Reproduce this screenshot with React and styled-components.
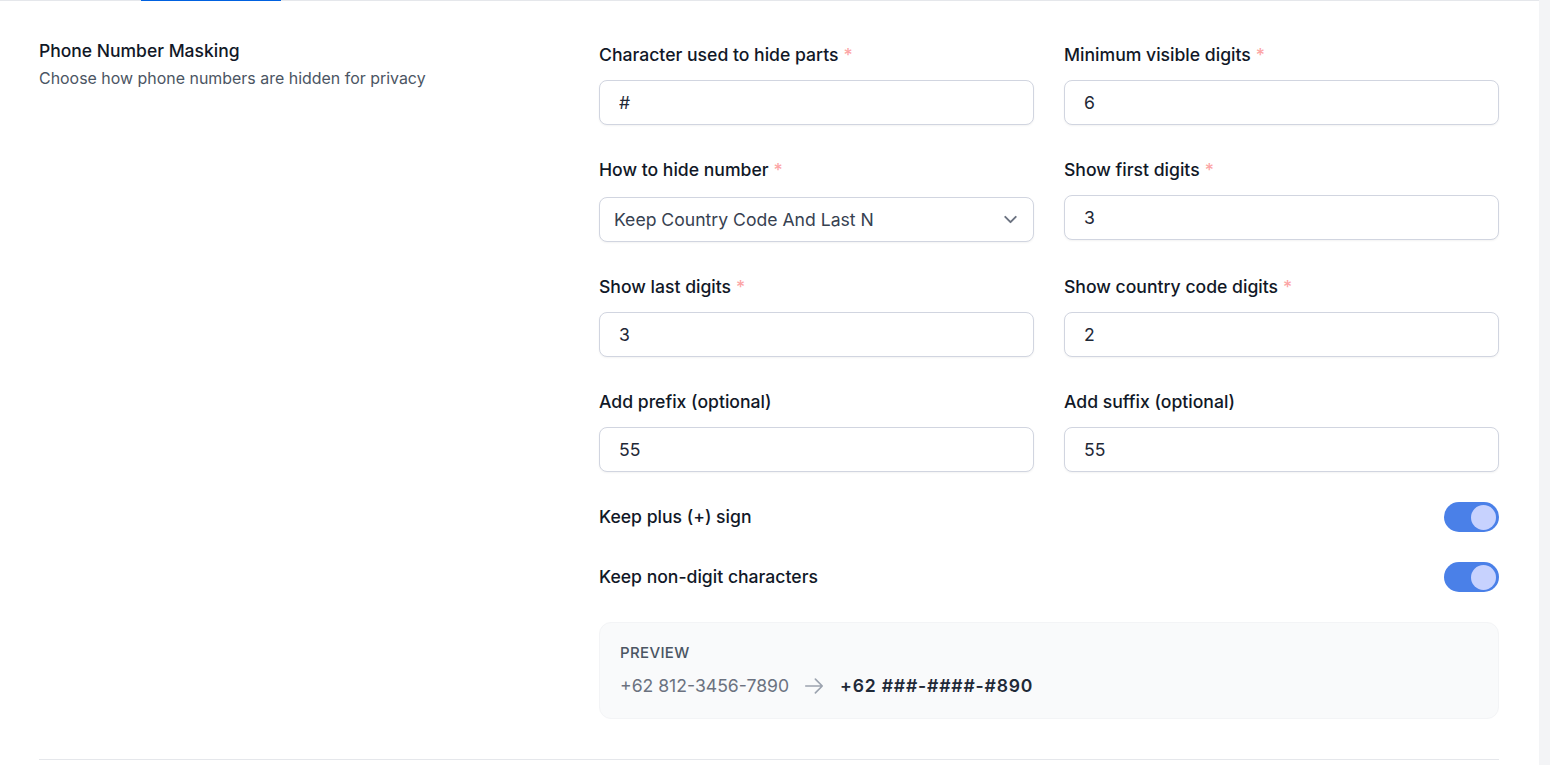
import React from "react";
import styled, { createGlobalStyle } from "styled-components";
import { ChevronDown } from "lucide-react";

const GlobalStyle = createGlobalStyle`
  html, body {
    margin: 0;
    height: 100%;
    overflow: hidden;
    background: #fff;
    font-family: Inter, "Liberation Sans", sans-serif;
  }
  * { box-sizing: border-box; }
`;

const Page = styled.div`
  display: flex;
  height: 765px;
`;

const Main = styled.main`
  flex: 1;
  min-width: 0;
`;

const Scrollbar = styled.div`
  width: 11px;
  background: #f3f4f6;
`;

const TabsLine = styled.div`
  height: 1px;
  padding-left: 141px;
  background: #e5e7eb;
`;

const ActiveTab = styled.div`
  width: 140px;
  height: 1px;
  background: #0061e0;
`;

const Section = styled.section`
  display: grid;
  grid-template-columns: 560px 900px;
  margin: 0 40px 0 39px;
  padding: 39px 0 40px;
  border-bottom: 1px solid #e5e7eb;
`;

const Intro = styled.div``;

const Title = styled.h3`
  margin: 0;
  font-size: 17.5px;
  line-height: 22px;
  font-weight: 500;
  color: #111827;
`;

const Description = styled.p`
  margin: 6px 0 0;
  font-size: 15.95px;
  line-height: 22px;
  color: #4b5563;
`;

const Form = styled.div`
  display: flex;
  flex-direction: column;
  gap: 30px;
`;

const FieldGrid = styled.div`
  display: grid;
  grid-template-columns: 435px 435px;
  column-gap: 30px;
  row-gap: 30px;
`;

const Field = styled.div`
  display: flex;
  flex-direction: column;
`;

const Label = styled.label`
  display: block;
  height: 30px;
  margin-bottom: ${(p) => (p.$select ? "12px" : "10px")};
  font-size: 17.6px;
  line-height: 30px;
  font-weight: 500;
  color: #111827;
`;

const Required = styled.span`
  margin-left: 5px;
  color: #fca5a5;
`;

const Input = styled.input`
  width: 100%;
  height: 45px;
  padding: 0 19px;
  border: 1px solid #d1d5e0;
  border-radius: 8px;
  box-shadow: 0 1px 2px rgba(0, 0, 0, 0.05);
  background: #fff;
  font-family: inherit;
  font-size: 17.6px;
  color: #1f2937;
  outline: none;
`;

const SelectBox = styled.div`
  display: flex;
  align-items: center;
  justify-content: space-between;
  height: 45px;
  padding: 0 12px 0 14px;
  border: 1px solid #d1d5e0;
  border-radius: 8px;
  box-shadow: 0 1px 2px rgba(0, 0, 0, 0.05);
  background: #fff;
  font-size: 17.6px;
  color: #374151;
`;

const SelectIcon = styled(ChevronDown)`
  width: 21px;
  height: 21px;
  stroke-width: 2.2;
  color: #6b7280;
`;

const ToggleRow = styled.div`
  display: flex;
  align-items: center;
  justify-content: space-between;
  height: 30px;
`;

const ToggleLabel = styled.span`
  margin-bottom: 2px;
  font-size: 17.6px;
  font-weight: 500;
  color: #111827;
`;

const Toggle = styled.div`
  display: flex;
  align-items: center;
  justify-content: flex-end;
  width: 55px;
  height: 30px;
  padding-right: 3px;
  border-radius: 15px;
  background: #4a80e8;
`;

const Knob = styled.span`
  width: 25px;
  height: 25px;
  border-radius: 50%;
  background: #c7d2fe;
`;

const Preview = styled.div`
  height: 97px;
  padding: 20px;
  border-radius: 12px;
  border: 1px solid #f3f4f6;
  background: #f9fafb;
`;

const PreviewLabel = styled.div`
  font-size: 15px;
  line-height: 20px;
  font-weight: 500;
  letter-spacing: 0.35px;
  color: #4b5563;
`;

const PreviewLine = styled.div`
  display: flex;
  align-items: center;
  margin-top: 11px;
  font-size: 17.6px;
  line-height: 24px;
`;

const Original = styled.span`
  color: #6b7280;
`;

const Arrow = styled.svg`
  width: 22px;
  height: 22px;
  margin: 0 15px 0 14px;
  fill: none;
  stroke: #9ca3af;
  stroke-width: 1.8;
  stroke-linecap: round;
  stroke-linejoin: round;
`;

const Masked = styled.span`
  font-weight: 600;
  letter-spacing: 0.8px;
  color: #1f2937;
`;

function TextField({ label, value, required }) {
  return (
    <Field>
      <Label>
        {label}
        {required && <Required>*</Required>}
      </Label>
      <Input defaultValue={value} />
    </Field>
  );
}

function SwitchRow({ label }) {
  return (
    <ToggleRow>
      <ToggleLabel>{label}</ToggleLabel>
      <Toggle>
        <Knob />
      </Toggle>
    </ToggleRow>
  );
}

export default function App() {
  return (
    <Page>
      <GlobalStyle />
      <Main>
        <TabsLine>
          <ActiveTab />
        </TabsLine>
        <Section>
          <Intro>
            <Title>Phone Number Masking</Title>
            <Description>Choose how phone numbers are hidden for privacy</Description>
          </Intro>
          <Form>
            <FieldGrid>
              <TextField label="Character used to hide parts" value="#" required />
              <TextField label="Minimum visible digits" value="6" required />
              <Field>
                <Label $select>
                  How to hide number
                  <Required>*</Required>
                </Label>
                <SelectBox>
                  Keep Country Code And Last N
                  <SelectIcon />
                </SelectBox>
              </Field>
              <TextField label="Show first digits" value="3" required />
              <TextField label="Show last digits" value="3" required />
              <TextField label="Show country code digits" value="2" required />
              <TextField label="Add prefix (optional)" value="55" />
              <TextField label="Add suffix (optional)" value="55" />
            </FieldGrid>
            <SwitchRow label="Keep plus (+) sign" />
            <SwitchRow label="Keep non-digit characters" />
            <Preview>
              <PreviewLabel>PREVIEW</PreviewLabel>
              <PreviewLine>
                <Original>+62 812-3456-7890</Original>
                <Arrow viewBox="0 0 24 24">
                  <path d="M13.5 4.5 21 12m0 0-7.5 7.5M21 12H3" />
                </Arrow>
                <Masked>+62 ###-####-#890</Masked>
              </PreviewLine>
            </Preview>
          </Form>
        </Section>
      </Main>
      <Scrollbar />
    </Page>
  );
}
